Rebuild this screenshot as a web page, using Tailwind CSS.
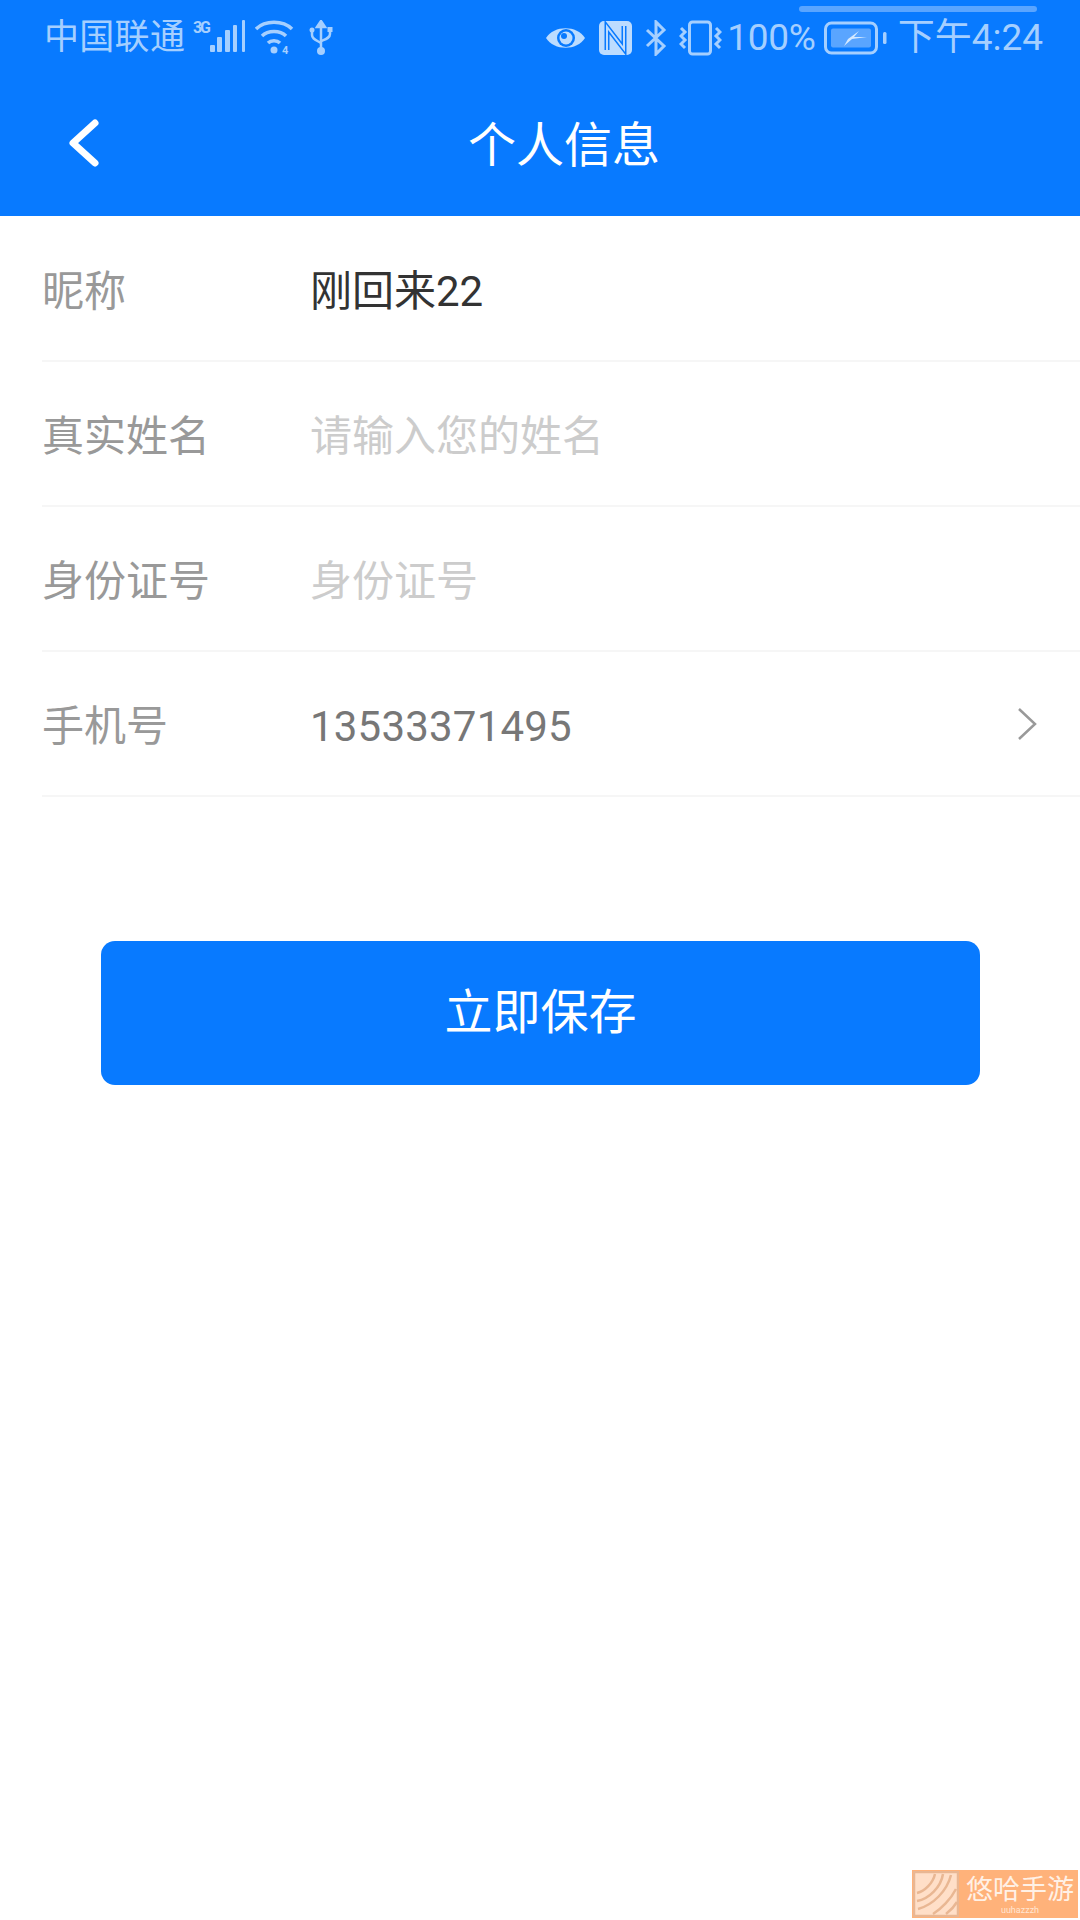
<!DOCTYPE html>
<html lang="zh">
<head>
  <meta charset="UTF-8" />
  <meta name="viewport" content="width=device-width, initial-scale=1" />
  <title>个人信息</title>
  <script src="https://cdn.jsdelivr.net/npm/@tailwindcss/browser@4"></script>
</head>
<body class="bg-white font-['Roboto','Noto_Sans_CJK_SC',sans-serif]">
  <div class="relative w-[1080px] h-[1920px] overflow-hidden">
    <!-- Header -->
    <header class="bg-[#087aff] h-[216px] flex flex-col">
      <div class="relative h-[72px] flex items-center justify-between pl-[44px] pr-[37px] pt-[4px] text-[#a5cfff]">
        <div class="absolute left-[799px] w-[238px] top-[6px] h-[6px] rounded-full bg-[#5aa5ff]"></div>
        <div class="flex items-center text-[35px]">
          <span class="w-[149px] tracking-[0.3px]">中国联通</span>
          <svg class="overflow-visible" width="54" height="36" viewBox="0 0 54 36" fill="#a5cfff">
            <text x="0" y="13" font-size="16" font-weight="700" font-family="Roboto" textLength="18">3G</text>
            <rect x="17" y="25" width="5" height="7" rx="1"/><rect x="24" y="17" width="5" height="15" rx="1"/><rect x="32" y="10" width="5" height="22" rx="1"/><rect x="40" y="5" width="4" height="27" rx="1"/><rect x="49" y="0" width="3" height="32" rx="1"/>
          </svg>
          <svg class="ml-[8px]" width="42" height="36" viewBox="0 0 42 36" fill="none" stroke="#a5cfff" stroke-width="3.5">
            <path d="M1 9C10 0 28 0 37 9"/><path d="M7 16C13 10 25 10 31 16"/><path d="M13 23C16 20 22 20 25 23"/>
            <circle cx="19" cy="30" r="3.5" fill="#a5cfff" stroke="none"/>
            <text x="27" y="34" font-size="11" font-weight="700" fill="#a5cfff" stroke="none" font-family="Roboto">4</text>
          </svg>
          <svg class="ml-[12px]" width="24" height="36" viewBox="0 0 24 36" fill="none" stroke="#a5cfff" stroke-width="2.5">
            <path d="M12 4V32"/><path d="M8 7L12 1L16 7Z" fill="#a5cfff"/><path d="M3 11V15C3 19 7 20 12 23"/><path d="M21 10V14C21 18 17 19 12 21"/>
            <circle cx="3" cy="10" r="2.5" fill="#a5cfff" stroke="none"/><rect x="18.5" y="7" width="5" height="5" fill="#a5cfff" stroke="none"/>
            <circle cx="12" cy="31" r="4" fill="#a5cfff" stroke="none"/>
          </svg>
        </div>
        <div class="flex items-center text-[37px]">
          <svg width="41" height="28" viewBox="0 0 41 28" fill="none">
            <path d="M1 14C9 1 32 1 40 14C32 27 9 27 1 14Z" fill="#bcdcff"/>
            <circle cx="21" cy="14" r="9" fill="#087aff"/><circle cx="21" cy="14" r="6.5" fill="#bcdcff"/><circle cx="19" cy="12" r="3" fill="#087aff"/>
          </svg>
          <svg class="ml-[13px]" width="33" height="34" viewBox="0 0 33 34">
            <rect width="33" height="34" rx="5" fill="#bcdcff"/>
            <path d="M8 29V6L25 28V5" fill="none" stroke="#087aff" stroke-width="5"/>
            <path d="M8 29V6L25 28V5" fill="none" stroke="#bcdcff" stroke-width="2"/>
          </svg>
          <svg class="ml-[12px]" width="24" height="36" viewBox="0 0 24 36" fill="none" stroke="#a5cfff" stroke-width="3">
            <path d="M3 10L20 26L12 34V2L20 10L3 26"/>
          </svg>
          <svg class="ml-[11px]" width="43" height="36" viewBox="0 0 43 36" fill="none" stroke="#a5cfff" stroke-width="3">
            <rect x="10.5" y="2" width="21" height="32" rx="3"/>
            <path d="M2 8L6 12L2 16L6 20L2 24L6 28" /><path d="M37 8L41 12L37 16L41 20L37 24L41 28"/>
          </svg>
          <span class="ml-[5px] tracking-[-0.3px]">100%</span>
          <svg class="ml-[8px]" width="63" height="34" viewBox="0 0 63 34" fill="none">
            <rect x="1.5" y="2" width="51" height="30" rx="6" stroke="#a5cfff" stroke-width="3"/>
            <rect x="7" y="7.5" width="40" height="19" rx="2" fill="#5aa5ff"/>
            <path d="M11 18H24L35 10L30 16H43L28 18L20 25L24 18Z" fill="#d5e9ff"/>
            <rect x="59" y="11" width="3.5" height="12" rx="1.5" fill="#a5cfff"/>
          </svg>
          <span class="ml-[11px]">下午4:24</span>
        </div>
      </div>
      <div class="relative flex-1 flex items-center justify-center pl-[48px] pt-[3px] text-white text-[48px] leading-none">
        <svg class="absolute left-[66px] top-[43px]" width="36" height="56" viewBox="0 0 36 56" fill="none" stroke="#fff" stroke-width="7" stroke-linecap="round" stroke-linejoin="round">
          <path d="M29 8L7 28L29 48"/>
        </svg>
        <h1 class="font-normal">个人信息</h1>
      </div>
    </header>

    <!-- Form rows -->
    <section class="pl-[42px]">
      <div class="h-[146px] pt-[6px] flex items-center border-b-2 border-[#f6f6f6] text-[42px]">
        <span class="w-[268px] text-[#999999]">昵称</span>
        <span class="text-[#333333]">刚回来22</span>
      </div>
      <div class="h-[145px] pt-[6px] flex items-center border-b-2 border-[#f6f6f6] text-[42px]">
        <span class="w-[268px] text-[#999999]">真实姓名</span>
        <span class="text-[#cccccc]">请输入您的姓名</span>
      </div>
      <div class="h-[145px] pt-[6px] flex items-center border-b-2 border-[#f6f6f6] text-[42px]">
        <span class="w-[268px] text-[#999999]">身份证号</span>
        <span class="text-[#cccccc]">身份证号</span>
      </div>
      <div class="h-[145px] pt-[6px] flex items-center border-b-2 border-[#f6f6f6] text-[42px]">
        <span class="w-[268px] text-[#999999]">手机号</span>
        <span class="text-[#777777] tracking-[0.2px]">13533371495</span>
        <svg class="ml-auto mr-[42px] -mt-[6px]" width="22" height="34" viewBox="0 0 22 34" fill="none" stroke="#999999" stroke-width="2.5">
          <path d="M3 2L19 17L3 32"/>
        </svg>
      </div>
    </section>

    <!-- Save button -->
    <div class="mt-[144px] pl-[101px]">
      <button class="w-[879px] h-[144px] rounded-[14px] bg-[#087aff] text-white text-[48px]">立即保存</button>
    </div>

    <!-- Watermark -->
    <div class="absolute left-[912px] top-[1870px] w-[166px] h-[48px] bg-[#ffb27a] flex items-center">
      <svg width="46" height="46" viewBox="0 0 46 46" fill="#ffdfc8" stroke="#e9b793" stroke-width="2.5" class="ml-[1px] shrink-0">
        <rect x="1" y="1" width="44" height="44"/>
        <path d="M4 22C12 20 20 12 22 3" fill="none"/><path d="M4 30C16 28 28 16 30 3" fill="none"/><path d="M5 38C20 34 34 20 38 4" fill="none"/><path d="M20 43C28 38 38 28 43 18" fill="none"/><path d="M33 43C37 40 41 36 44 31" fill="none"/>
      </svg>
      <div class="ml-[7px] flex flex-col items-center text-[#fff1e6]">
        <span class="text-[27px] leading-[30px] font-['Noto_Sans_CJK_SC'] whitespace-nowrap">悠哈手游</span>
        <span class="text-[9px] leading-[10px] mt-[2px] text-[#ffe6d4]">uuhazzzh</span>
      </div>
    </div>
  </div>
</body>
</html>
